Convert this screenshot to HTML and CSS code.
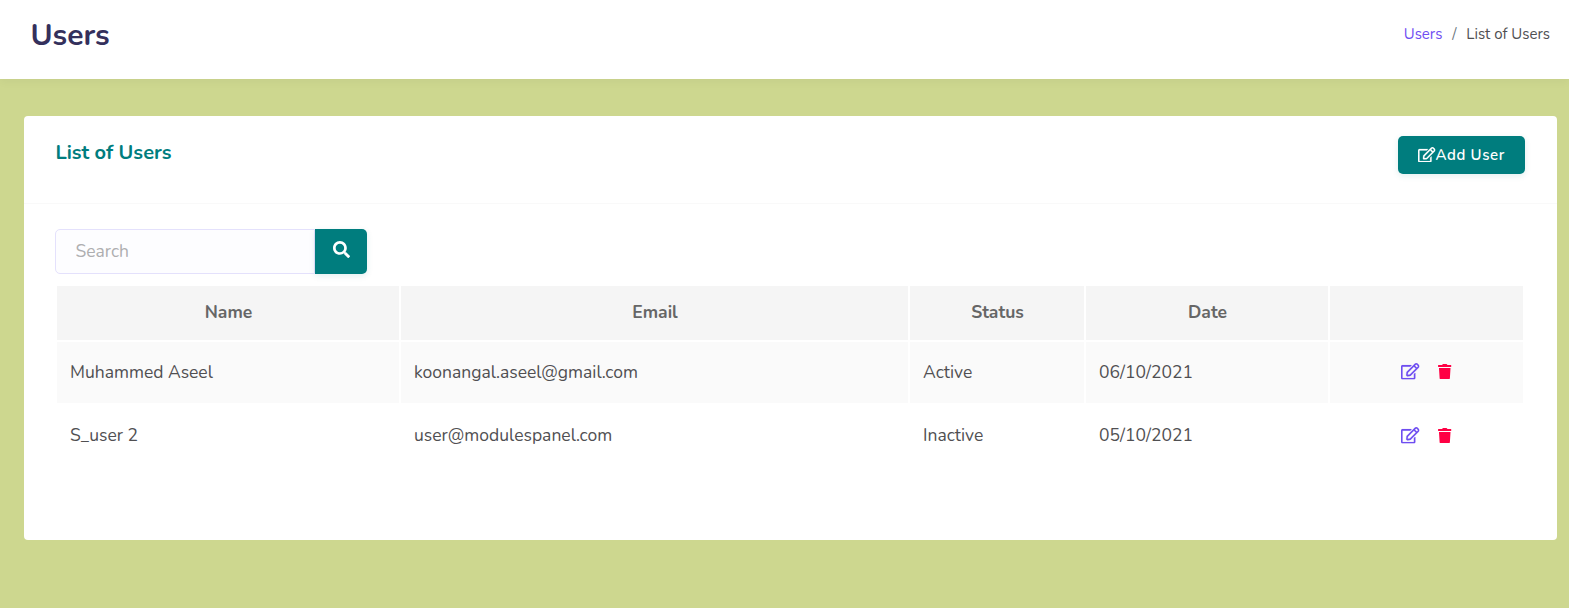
FILE: index.html
```html
<!DOCTYPE html>
<html lang="en">
<head>
<meta charset="utf-8">
<title>Users</title>
<link rel="stylesheet" href="styles.css">
</head>
<body>
<svg class="sprite" aria-hidden="true">
  <symbol id="edit" viewBox="0 0 576 512"><path d="M402.3 344.9l32-32c5-5 13.7-1.5 13.7 5.7V464c0 26.500-21.500 48-48 48H48c-26.500 0-48-21.500-48-48V112c0-26.500 21.500-48 48-48h273.500c7.100 0 10.700 8.600 5.700 13.700l-32 32c-1.500 1.500-3.500 2.300-5.700 2.300H48v352h352V350.500c0-2.100.8-4.100 2.300-5.600zm156.600-201.800L296.300 405.700l-90.400 10c-26.200 2.900-48.500-19.200-45.600-45.600l10-90.400L432.900 17.100c22.900-22.900 59.900-22.900 82.700 0l43.200 43.200c22.900 22.900 22.900 60 .1 82.800zM460.100 174L402 115.900 216.200 301.800l-7.300 65.300 65.300-7.300L460.100 174zm64.800-79.700l-43.200-43.200c-4.100-4.100-10.800-4.100-14.800 0L436 82l58.100 58.100 30.900-30.900c4-4.200 4-10.800-.1-14.900z"/></symbol>
  <symbol id="trash" viewBox="0 0 448 512"><path d="M432 32H312l-9.400-18.700A24 24 0 0 0 281.100 0H166.800a23.720 23.720 0 0 0-21.400 13.300L136 32H16A16 16 0 0 0 0 48v32a16 16 0 0 0 16 16h416a16 16 0 0 0 16-16V48a16 16 0 0 0-16-16zM32 128l21.200 339a48 48 0 0 0 47.900 45h245.800a48 48 0 0 0 47.900-45L416 128z"/></symbol>
  <symbol id="search" viewBox="0 0 512 512"><path d="M505 442.700L405.300 343c-4.500-4.500-10.600-7-17-7H372c27.600-35.300 44-79.700 44-128C416 93.100 322.900 0 208 0S0 93.100 0 208s93.100 208 208 208c48.300 0 92.700-16.400 128-44v16.300c0 6.400 2.500 12.500 7 17l99.700 99.700c9.400 9.400 24.600 9.400 33.900 0l28.300-28.300c9.400-9.400 9.400-24.600.1-34zM208 336c-70.700 0-128-57.200-128-128 0-70.700 57.200-128 128-128 70.700 0 128 57.200 128 128 0 70.700-57.200 128-128 128z"/></symbol>
</svg>
<header class="topbar">
  <h1 class="page-title">Users</h1>
  <nav class="breadcrumb"><a class="crumb-link" href="#">Users</a><span class="crumb-sep">/</span><span class="crumb-current">List of Users</span></nav>
</header>
<main class="card">
  <div class="card-header">
    <h2 class="card-title">List of Users</h2>
    <button class="btn-add"><svg class="icon-edit"><use href="#edit"/></svg><span>Add User</span></button>
  </div>
  <div class="card-body">
    <form class="search">
      <input class="search-input" type="text" placeholder="Search">
      <button class="search-btn" type="button" aria-label="Search"><svg class="icon-search"><use href="#search"/></svg></button>
    </form>
    <table class="users">
      <colgroup><col class="c-name"><col class="c-email"><col class="c-status"><col class="c-date"><col class="c-actions"></colgroup>
      <thead>
        <tr><th>Name</th><th>Email</th><th>Status</th><th>Date</th><th></th></tr>
      </thead>
      <tbody>
        <tr><td>Muhammed Aseel</td><td>koonangal.aseel@gmail.com</td><td>Active</td><td>06/10/2021</td>
          <td><div class="actions"><svg class="icon-edit"><use href="#edit"/></svg><svg class="icon-trash"><use href="#trash"/></svg></div></td></tr>
        <tr><td>S_user 2</td><td>user@modulespanel.com</td><td>Inactive</td><td>05/10/2021</td>
          <td><div class="actions"><svg class="icon-edit"><use href="#edit"/></svg><svg class="icon-trash"><use href="#trash"/></svg></div></td></tr>
      </tbody>
    </table>
  </div>
</main>
</body>
</html>
```
FILE: styles.css
```css
* { box-sizing: border-box; }
body {
  margin: 0;
  height: 608px;
  overflow: hidden;
  background: #cdd78f;
  color: #504f52;
  font-family: Nunito, Lato, sans-serif;
  font-size: 17.5px;
}
.sprite { display: none; }
svg { display: block; fill: currentColor; }
.topbar {
  display: flex;
  justify-content: space-between;
  height: 79px;
  padding: 17px 19px 0 30px;
  background: #fff;
  box-shadow: 0 4px 8px rgba(0, 0, 0, .03);
}
.page-title { margin: 0; padding: 1px 0 0 .4px; font-size: 30px; line-height: 36px; font-weight: 700; color: #34305c; }
.breadcrumb { display: flex; font-size: 15px; line-height: 34px; }
.crumb-link { color: #6f4ef2; text-decoration: none; }
.crumb-sep { width: 24px; text-align: center; color: #6c757d; }
.card {
  width: 1533px;
  height: 424px;
  margin: 37px 0 0 24px;
  background: #fff;
  border-radius: 4px;
}
.card-header {
  display: flex;
  justify-content: space-between;
  align-items: flex-start;
  height: 88px;
  padding: 20px 32px 0 31.4px;
  border-bottom: 1px solid #f9f9f9;
}
.card-title { margin: 0; font-size: 20px; line-height: 34px; font-weight: 700; color: #007d7e; }
.btn-add {
  display: flex;
  align-items: center;
  width: 127px;
  height: 38px;
  padding: 0 0 0 20px;
  border: 0;
  border-radius: 5px;
  background: #007d7e;
  box-shadow: 0 2px 6px rgba(0, 125, 126, .12);
  color: #fff;
  font: 600 15px Nunito, Lato, sans-serif;
  letter-spacing: .6px;
}
.btn-add .icon-edit { height: 15.5px; width: 17.5px; margin-top: -1px; stroke: currentColor; stroke-width: 6px; }
.card-body { padding: 25px 31px 0; }
.search { display: flex; height: 45px; width: 312px; }
.search-input {
  width: 260px;
  padding: 0 19.5px 1px;
  border: 1px solid #e4e1fc;
  border-radius: 5px 0 0 5px;
  background: #fdfdff;
  font: 17.5px Nunito, Lato, sans-serif;
}
.search-input::placeholder { color: #aeaeb0; opacity: 1; }
.search-btn {
  display: flex;
  justify-content: center;
  width: 52px;
  padding: 12px 0 0;
  border: 0;
  border-radius: 0 5px 5px 0;
  background: #007d7e;
  box-shadow: 0 2px 6px rgba(0, 125, 126, .12);
  color: #fff;
}
.icon-search { width: 17px; height: 17px; }
.icon-edit { width: 18.5px; height: 16.5px; }
.icon-trash { width: 13.5px; height: 15.5px; margin-top: .5px; }
.users { width: 1470px; margin-top: 10px; table-layout: fixed; border-collapse: separate; border-spacing: 2px; }
.c-name { width: 342px; }
.c-email { width: 507px; }
.c-status { width: 174px; }
.c-date { width: 242px; }
.users th { height: 54px; padding: 0 0 2px 1px; background: #f5f5f5; color: #666; font-weight: 700; }
.users td { height: 61px; padding: 0 13px 2px; }
.users tbody tr:first-child td { background: #fafafa; }
.users tbody tr:last-child .actions { padding-top: 1.5px; }
.actions { display: flex; justify-content: center; gap: 18.5px; color: #6f4ef2; }
.actions .icon-edit { stroke: currentColor; stroke-width: 4px; }
.actions .icon-trash { color: #ff0044; }
```
